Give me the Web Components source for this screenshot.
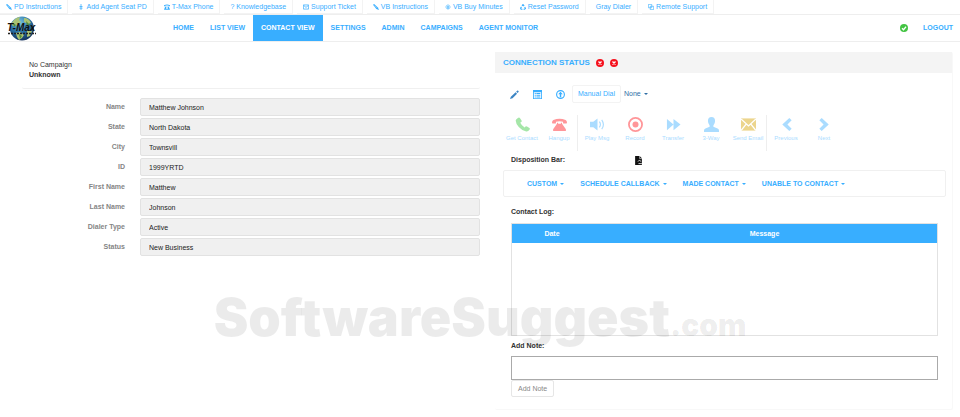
<!DOCTYPE html>
<html lang="en">
<head>
<meta charset="utf-8">
<meta name="viewport" content="width=device-width, initial-scale=1">
<title>T-Max Contact View</title>
<style>
body {
  margin: 0;
  background: #fff;
  color: #333;
  font: 7px/10px "Liberation Sans", Arial, sans-serif;
  --blue: #38aeff;
  --line: #f0f0f0;
}
main {
  display: grid;
  grid-template-columns: 1fr 1fr;
  gap: 15px;
  align-items: start;
  padding: 10px 7px 6px 22px;
}
</style>
</head>
<body>
<top-bar>
  <top-link icon="pen">PD Instructions</top-link>
  <top-link icon="plus">Add Agent Seat PD</top-link>
  <top-link icon="phonebox">T-Max Phone</top-link>
  <top-link>? Knowledgebase</top-link>
  <top-link icon="mail">Support Ticket</top-link>
  <top-link icon="pen">VB Instructions</top-link>
  <top-link icon="coin">VB Buy Minutes</top-link>
  <top-link icon="recycle">Reset Password</top-link>
  <top-link>Gray Dialer</top-link>
  <top-link icon="windows">Remote Support</top-link>
</top-bar>
<nav-bar>
  <nav-link>HOME</nav-link>
  <nav-link>LIST VIEW</nav-link>
  <nav-link active>CONTACT VIEW</nav-link>
  <nav-link>SETTINGS</nav-link>
  <nav-link>ADMIN</nav-link>
  <nav-link>CAMPAIGNS</nav-link>
  <nav-link>AGENT MONITOR</nav-link>
</nav-bar>
<main>
  <contact-card>
    <field-row label="Name" value="Matthew Johnson"></field-row>
    <field-row label="State" value="North Dakota"></field-row>
    <field-row label="City" value="Townsvill"></field-row>
    <field-row label="ID" value="1999YRTD"></field-row>
    <field-row label="First Name" value="Matthew"></field-row>
    <field-row label="Last Name" value="Johnson"></field-row>
    <field-row label="Dialer Type" value="Active"></field-row>
    <field-row label="Status" value="New Business"></field-row>
  </contact-card>
  <call-panel>
    <dial-row slot="dial"></dial-row>
    <call-tools slot="tools">
      <tool-button icon="phone" tone="green">Get Contact</tool-button>
      <tool-button icon="hangup" tone="red" last>Hangup</tool-button>
      <tool-button icon="volume">Play Msg</tool-button>
      <tool-button icon="record" tone="red">Record</tool-button>
      <tool-button icon="forward">Transfer</tool-button>
      <tool-button icon="user">3-Way</tool-button>
      <tool-button icon="envelope" tone="gold" last>Send Email</tool-button>
      <tool-button icon="prev">Previous</tool-button>
      <tool-button icon="next">Next</tool-button>
    </call-tools>
    <disposition-bar slot="disposition">
      <drop-button>CUSTOM</drop-button>
      <drop-button>SCHEDULE CALLBACK</drop-button>
      <drop-button>MADE CONTACT</drop-button>
      <drop-button>UNABLE TO CONTACT</drop-button>
    </disposition-bar>
    <contact-log slot="log"></contact-log>
    <note-form slot="note"></note-form>
  </call-panel>
</main>
<water-mark>SoftwareSuggest<small slot="suffix">.com</small></water-mark>

<script>
const ICONS = {
  pen: '<path d="M0 2 3 0 13 9.500 16 16 9 13.500z"/><path d="M4 4.500l6 5.500" stroke="#fff" stroke-width="1"/>',
  plus: '<path d="M7 0h2v16H7zM4 5h8v2H4zM4 10h8v2H4z"/>',
  phonebox: '<path d="M0 6V3Q8-1 16 3v3h-4V4H4v2zM3 7h10l3 8H0z"/><circle cx="8" cy="10.500" r="2.600" fill="#fff"/><circle cx="8" cy="10.500" r="1.200"/>',
  mail: '<path d="M1 2.500h14v11H1zM2 4l6 5 6-5" fill="none" stroke="currentColor" stroke-width="2"/>',
  coin: '<path d="M8 2.500a5.500 5.500 0 1 0 .01 0M5 7h6M5 10h6M8 5v8" fill="none" stroke="currentColor" stroke-width="1.500"/>',
  recycle: '<path d="M5.500 5 8 1.500 11 5.500M12.500 8l2 4-2.500 2H9.500M6.500 14H3l-1.500-3L4 7.500" fill="none" stroke="currentColor" stroke-width="3"/>',
  windows: '<path d="M1 1h9v9H1zM6 6h9v9H6z" fill="none" stroke="currentColor" stroke-width="1.700"/>',
  check: '<circle cx="8" cy="8" r="8" fill="#43c443"/><path d="M4 8.500 7 11.500 12 5.500" fill="none" stroke="#fff" stroke-width="2.500"/>',
  cross: '<circle cx="8" cy="8" r="8" fill="#f5101c"/><path d="M5 5l6 6M11 5l-6 6" stroke="#fff" stroke-width="2.600"/>',
  pencil: '<path d="M0 16 1.500 12 10 4 12.500 6.500 4.500 14.500zM11 3l1.500-1.500Q13.500.3 14.500 1.300l.6.600q.8.800 0 1.800L13.500 5.500z" fill="#3c85c4"/>',
  list: '<path fill-rule="evenodd" d="M0 0h16v16H0zM1.500 4v10.500h13V4z"/><path d="M3 5.500h2v1.700H3zM6 5.500h7v1.700H6zM3 8.500h2v1.700H3zM6 8.500h7v1.700H6zM3 11.500h2v1.700H3zM6 11.500h7v1.700H6z"/>',
  upload: '<circle cx="8" cy="8" r="6.900" fill="none" stroke="currentColor" stroke-width="2"/><path d="M8 3l4 4.500H9.300V13H6.700V7.500H4z"/>',
  phone: '<path d="M3.500.7Q4.500 0 5.200 1L7 3.800q.5.900-.4 1.600l-1 .8q1.600 3.300 4.600 5l1-1q.7-.7 1.600-.1l2.600 1.700q.9.700.2 1.600-1.600 2.300-3.600 2Q7.500 14.500 4 10.600.8 7 .7 3.800.8 2.200 3.500.7z"/>',
  hangup: '<path d="M0 6.200Q0 4 1.500 3.200 8 .4 14.500 3.200 16 4 16 6.200q0 .8-.8.8h-2.700q-.7 0-.7-.7V5Q8 3.800 4.200 5v1.300q0 .7-.7.700H.8Q0 7 0 6.200zM5.300 6h1.200v1.300h3V6h1.200v1.300L14.800 13v2H1.200v-2l4.100-5.700z"/>',
  volume: '<path d="M0 5h3.500L8 1.500v13L3.500 11H0z"/><path d="M10 5q2.200 3 0 6M12.500 3q3.600 5 0 10" fill="none" stroke="currentColor" stroke-width="1.200"/>',
  record: '<circle cx="8" cy="8" r="7" fill="none" stroke="currentColor" stroke-width="1.900"/><circle cx="8" cy="8" r="3.200"/>',
  forward: '<path d="M1 2 8 8V2l7.500 6L8 14V8L1 14z"/>',
  user: '<path d="M8 0q3.800 0 3.800 4.200Q11.800 7 10 9v1.400l4.500 1.800q1.500.6 1.500 2.300V16H0v-1.500q0-1.700 1.500-2.300L6 10.400V9Q4.200 7 4.200 4.200 4.200 0 8 0z"/>',
  envelope: '<path d="M0 1.500h16v13H0z"/><path d="M0 2l8 7.500L16 2M0 14.500l5.500-7M16 14.500l-5.500-7" fill="none" stroke="#fff" stroke-width="1.400"/>',
  prev: '<path d="M11 1 13.500 3.500 9 8l4.500 4.500L11 15 3.500 8z"/>',
  next: '<path d="M5 1 2.500 3.500 7 8l-4.500 4.500L5 15l7.500-7z"/>',
  file: '<path d="M2 0h8l4 4v12H2z"/><path d="M10 0v4.500h4" fill="none" stroke="#fff"/><path d="M7 10l3-3 2 3M8 13.500h6" fill="none" stroke="#fff" stroke-width="1.400"/>'
};

function define(name, html, setup) {
  const template = document.createElement('template');
  template.innerHTML = html;
  customElements.define(name, class extends HTMLElement {
    constructor() {
      super();
      this.attachShadow({ mode: 'open' }).append(template.content.cloneNode(true));
    }
    connectedCallback() { if (setup) setup(this, this.shadowRoot); }
  });
}

define('ui-icon', `<style>
  :host { display: block; flex: none; width: var(--size, 8px); height: var(--size, 8px); }
  svg { display: block; width: 100%; height: 100%; }
</style><svg viewBox="0 0 16 16" fill="currentColor" aria-hidden="true"></svg>`,
(el, root) => { root.querySelector('svg').innerHTML = ICONS[el.getAttribute('name')] || ''; });

define('top-bar', `<style>
  :host { display: block; border-bottom: 1px solid #eee; }
  nav { display: flex; gap: 4px; }
</style><nav aria-label="Quick links"><slot></slot></nav>`);

define('top-link', `<style>
  :host { display: block; border: solid #f3f3f3; border-width: 0 1px 1px 0; }
  a { display: flex; align-items: center; gap: 2px; height: 13px; padding: 0 6px;
      color: var(--blue); text-decoration: none; white-space: nowrap; }
  ui-icon { --size: 6px; }
</style><a href="#"><slot></slot></a>`,
(el, root) => {
  const name = el.getAttribute('icon');
  if (!name) return;
  const icon = document.createElement('ui-icon');
  icon.setAttribute('name', name);
  root.querySelector('a').prepend(icon);
});

define('globe-logo', `<style>
  :host { display: block; width: 30px; height: 25px; }
  svg { display: block; width: 100%; height: 100%; }
  text { font: italic bold 10px "Liberation Sans", Arial, sans-serif; }
</style>
<svg viewBox="0 0 30 25" role="img" aria-label="T-Max">
  <defs><radialGradient id="sea" cx=".4" cy=".25" r=".8">
    <stop offset="0" stop-color="#79c4e0"/><stop offset=".5" stop-color="#2b74a8"/><stop offset="1" stop-color="#102a55"/>
  </radialGradient></defs>
  <circle cx="15" cy="12.500" r="12" fill="url(#sea)"/>
  <path d="M7 4q3-3 6-3l-1 3 2 2-3 3-5 1-2-2zM17 2q5 0 7 5l-3 1-4-2zM9 17l4-1 4 3-2 3-3 2-2-3zM20 15l5 0-2 5-3 1z" fill="#a9c274"/>
  <path d="M6 7l3 2-2 2zM19 5l4 4-3 1zM12 18l3 2-2 3z" fill="#4f8a3c"/>
  <text x="0" y="15" fill="#111">T-Max</text>
  <path d="M1 17.500h28" stroke="#222" stroke-width="1.500" stroke-dasharray="2 1"/>
</svg>`);

define('nav-bar', `<style>
  :host { display: flex; align-items: center; height: 26px; padding: 0 7px; border-bottom: 1px solid #eee; }
  nav { display: flex; align-self: stretch; margin-left: 128px; }
  .end { display: flex; align-items: center; gap: 15px; margin-left: auto; font-weight: bold; }
  .end a { color: var(--blue); text-decoration: none; }
</style>
<globe-logo></globe-logo>
<nav aria-label="Main"><slot></slot></nav>
<div class="end"><ui-icon name="check"></ui-icon><a href="#">LOGOUT</a></div>`);

define('nav-link', `<style>
  :host { display: flex; color: var(--blue); }
  :host([active]) { background: var(--blue); color: #fff; }
  a { display: flex; align-items: center; padding: 0 8px; color: inherit; font-weight: bold; text-decoration: none; white-space: nowrap; }
</style><a href="#"><slot></slot></a>`);

define('contact-card', `<style>
  :host { display: block; }
  header { padding: 8px 7px; border-bottom: 1px solid #f0f0f0; border-radius: 2px; }
  strong { display: block; }
  .rows { display: grid; gap: 2px; padding-top: 9px; }
</style>
<header>No Campaign<strong>Unknown</strong></header>
<div class="rows"><slot></slot></div>`);

define('field-row', `<style>
  :host { display: grid; grid-template-columns: 103px 1fr; gap: 15px; }
  label { padding-top: 4px; text-align: right; font-weight: bold; color: #858585; }
  input { width: 100%; height: 18px; box-sizing: border-box; margin: 0; padding: 0 8px; border: 1px solid #e2e2e2;
    border-radius: 2px; background: #f0f0f0; color: #222; font: inherit; }
</style><label for="value"></label><input id="value" type="text" readonly>`,
(el, root) => {
  root.querySelector('label').textContent = el.getAttribute('label');
  root.querySelector('input').value = el.getAttribute('value');
});

define('call-panel', `<style>
  :host { display: block; border: solid #f8f8f8; border-width: 0 1px 1px 0; border-radius: 2px; }
  header { display: flex; align-items: center; gap: 6px; height: 21px; padding: 0 8px; background: #f4f4f4; }
  h2 { margin: 0; font-size: 8px; line-height: 10px; font-weight: bold; color: var(--blue); }
  .body { padding: 12px 6px 12px 8px; }
</style>
<header><h2>CONNECTION STATUS</h2><ui-icon name="cross"></ui-icon><ui-icon name="cross"></ui-icon></header>
<div class="body">
  <slot name="dial"></slot><slot name="tools"></slot><slot name="disposition"></slot>
  <slot name="log"></slot><slot name="note"></slot>
</div>`);

define('dial-row', `<style>
  :host { display: flex; align-items: center; height: 18px; padding-left: 7px; }
  button { display: flex; align-items: center; margin: 0; padding: 0; border: 0; background: none; font: inherit; color: var(--blue); }
  .icons { display: flex; gap: 14px; margin-right: 7px; }
  ui-icon { --size: 9px; }
  .manual { height: 18px; padding: 0 5px; border: 1px solid #f3f3f3; border-radius: 2px; }
  .none { gap: 3px; margin-left: 3px; color: #2f6ea5; }
  .none::after { content: ""; border: 2px solid transparent; border-top-color: currentColor; border-bottom: 0; }
</style>
<div class="icons">
  <button type="button" aria-label="Edit"><ui-icon name="pencil"></ui-icon></button>
  <button type="button" aria-label="List"><ui-icon name="list"></ui-icon></button>
  <button type="button" aria-label="Upload"><ui-icon name="upload"></ui-icon></button>
</div>
<button type="button" class="manual">Manual Dial</button>
<button type="button" class="none">None</button>`);

define('call-tools', `<style>
  :host { display: flex; padding-top: 12px; }
</style><slot></slot>`);

define('tool-button', `<style>
  :host { display: block; flex: none; width: 38px; box-sizing: border-box; height: 36px; color: #aadcff; }
  :host([last]) { width: 37px; border-right: 1px solid #eee; }
  :host([tone="green"]) { --tone: #a5e6a8; }
  :host([tone="red"]) { --tone: #ff9699; }
  :host([tone="gold"]) { --tone: #ecd58d; }
  button { display: flex; flex-direction: column; align-items: center; gap: 2px; width: 100%; margin: 0; padding: 2px 0 0;
    border: 0; background: none; color: inherit; font: 6px/8px "Liberation Sans", Arial, sans-serif; white-space: nowrap; }
  ui-icon { --size: 15px; color: var(--tone, currentColor); }
</style><button type="button"><ui-icon></ui-icon><span><slot></slot></span></button>`,
(el, root) => {
  const icon = document.createElement('ui-icon');
  icon.setAttribute('name', el.getAttribute('icon'));
  root.querySelector('ui-icon').replaceWith(icon);
});

define('disposition-bar', `<style>
  :host { display: block; padding-top: 4px; }
  .title { display: flex; align-items: center; padding-left: 8px; font-weight: bold; }
  .title span { flex: 0 0 123px; }
  ui-icon { --size: 9px; color: #111; }
  .menus { display: flex; align-items: center; gap: 16px; height: 27px; box-sizing: border-box; margin-top: 5px;
    padding: 0 23px; border: 1px solid #f0f0f0; border-radius: 2px; }
</style>
<div class="title"><span>Disposition Bar:</span><ui-icon name="file"></ui-icon></div>
<div class="menus"><slot></slot></div>`);

define('drop-button', `<style>
  :host { display: block; }
  button { display: flex; align-items: center; gap: 3px; margin: 0; padding: 0; border: 0; background: none;
    color: var(--blue); font: inherit; font-weight: bold; white-space: nowrap; }
  button::after { content: ""; border: 2px solid transparent; border-top-color: currentColor; border-bottom: 0; }
</style><button type="button"><slot></slot></button>`);

define('contact-log', `<style>
  :host { display: block; padding: 10px 8px 0; }
  h3 { margin: 0 0 6px; font-size: 7px; line-height: 10px; }
  table { width: 100%; border-collapse: collapse; table-layout: fixed; border: 1px solid #e2e2e2; }
  th { height: 19px; padding: 0; background: var(--blue); color: #fff; }
  th:first-child { width: 80px; }
  td { height: 92px; padding: 0; }
</style>
<h3>Contact Log:</h3>
<table><thead><tr><th scope="col">Date</th><th scope="col">Message</th></tr></thead>
<tbody><tr><td colspan="2"></td></tr></tbody></table>`);

define('note-form', `<style>
  :host { display: block; padding: 5px 8px 0; }
  label { display: block; margin-bottom: 5px; font-weight: bold; }
  textarea { display: block; width: 100%; height: 24px; box-sizing: border-box; margin: 0; padding: 4px; border: 1px solid #aaa;
    border-radius: 0; resize: none; background: #fff; font: inherit; }
  button { display: block; height: 17px; margin: 0; padding: 0 6px; border: 1px solid #e6e6e6; border-radius: 2px;
    background: #fff; color: #888; font: inherit; }
</style>
<label for="note">Add Note:</label><textarea id="note"></textarea><button type="button">Add Note</button>`);

define('water-mark', `<style>
  :host { position: absolute; top: 286px; left: 0; right: 0; text-align: center; pointer-events: none; white-space: nowrap;
    color: rgba(0, 0, 0, .08); font: 900 52px/64px Inter, "Open Sans", sans-serif; }
  ::slotted(small) { font-size: 30px; }
</style><slot></slot><slot name="suffix"></slot>`);
</script>
</body>
</html>
